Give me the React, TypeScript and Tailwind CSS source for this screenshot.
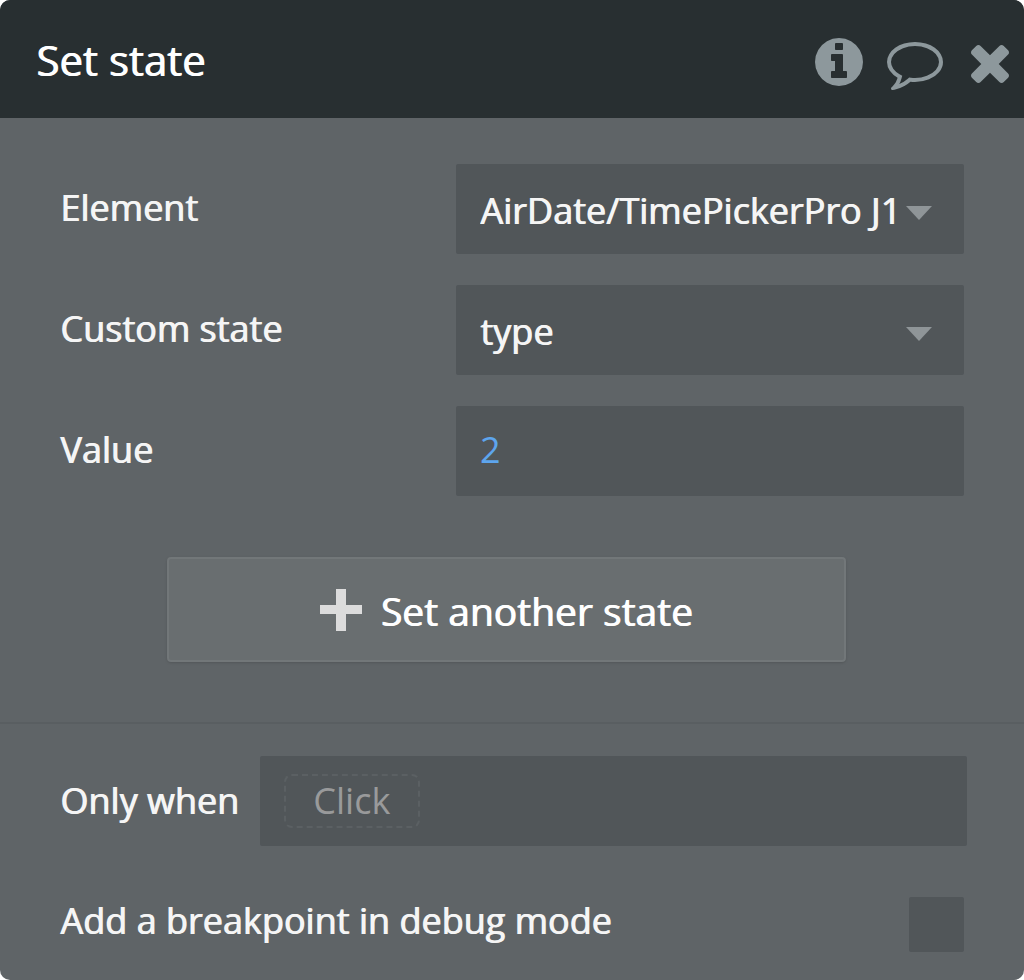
import type { ReactNode } from "react";

type IconProps = { className: string };

function InfoIcon({ className }: IconProps) {
  return (
    <svg viewBox="128 128 1536 1536" className={className} fill="currentColor" aria-hidden="true">
      <path d="M1152 1376v-160q0-14-9-23t-23-9h-96v-512q0-14-9-23t-23-9h-320q-14 0-23 9t-9 23v160q0 14 9 23t23 9h96v320h-96q-14 0-23 9t-9 23v160q0 14 9 23t23 9h448q14 0 23-9t9-23zm-128-896v-160q0-14-9-23t-23-9h-192q-14 0-23 9t-9 23v160q0 14 9 23t23 9h192q14 0 23-9t9-23zm640 416q0 209-103 385.5t-279.5 279.5-385.5 103-385.5-103-279.5-279.5-103-385.5 103-385.5 279.5-279.5 385.5-103 385.5 103 279.5 279.5 103 385.5z" />
    </svg>
  );
}

function CommentIcon({ className }: IconProps) {
  return (
    <svg viewBox="0 256 1792 1536" className={className} fill="currentColor" aria-hidden="true">
      <path d="M896 384q-204 0-381.5 69.5t-282 187.5-104.5 255q0 112 71.5 213.5t201.5 175.5l87 50-27 96q-24 91-70 172 152-63 275-171l43-38 57 6q69 8 130 8 204 0 381.5-69.5t282-187.5 104.5-255-104.5-255-282-187.5-381.5-69.5zm896 512q0 174-120 321.5t-326 233-450 85.5q-70 0-145-8-198 175-460 242-49 14-114 22h-5q-15 0-27-10.5t-16-27.5v-1q-3-4-.5-12t2-10 4.5-9.5l6-9 7-8.5 8-9q7-8 31-34.5t34.5-38 31-39.5 32.5-51 27-59 26-76q-157-89-247.5-220t-90.5-281q0-130 71-248.5t191-204.5 286-136.5 348-50.5 348 50.5 286 136.5 191 204.5 71 248.5z" />
    </svg>
  );
}

function CloseIcon({ className }: IconProps) {
  return (
    <svg viewBox="302 366 1188 1188" className={className} fill="currentColor" aria-hidden="true">
      <path d="M1490 1322q0 40-28 68l-136 136q-28 28-68 28t-68-28l-294-294-294 294q-28 28-68 28t-68-28l-136-136q-28-28-28-68t28-68l294-294-294-294q-28-28-28-68t28-68l136-136q28-28 68-28t68 28l294 294 294-294q28-28 68-28t68 28l136 136q28 28 28 68t-28 68l-294 294 294 294q28 28 28 68z" />
    </svg>
  );
}

function Row({ id, label, children }: { id: string; label: string; children: ReactNode }) {
  return (
    <div className="flex items-center">
      <label htmlFor={id} className="w-[396px] shrink-0 pb-0.5">
        {label}
      </label>
      <div className="min-w-0 flex-1">{children}</div>
    </div>
  );
}

function Dropdown({ id, value }: { id: string; value: string }) {
  return (
    <div className="relative">
      <select
        id={id}
        defaultValue={value}
        className="block h-[90px] w-full appearance-none rounded-xs bg-[#515659] pt-1 pr-8 pl-6 outline-none [text-shadow:1px_0_0_currentColor]"
      >
        <option>{value}</option>
      </select>
      <svg
        viewBox="0 0 26 14"
        className="pointer-events-none absolute top-[42px] right-8 h-3.5 w-[26px] fill-[#8f9598]"
        aria-hidden="true"
      >
        <path d="M0 0h26L13 14z" />
      </svg>
    </div>
  );
}

export default function App() {
  return (
    <main className="overflow-hidden rounded-[10px] bg-[#5f6467] font-['Open_Sans',sans-serif] text-[36px] leading-[48px] text-[#f5f5f5] [text-shadow:1px_0_0_currentColor]">
      <header className="flex h-[118px] items-center justify-between bg-[#282f31] pr-[15px] pl-9">
        <h1 className="pt-0.5 text-[42px] text-white">Set state</h1>
        <div className="flex items-center pt-1.5 text-[#8d989c]">
          <button type="button" aria-label="Information" className="mr-6">
            <InfoIcon className="size-12" />
          </button>
          <button type="button" aria-label="Comment" className="mr-7">
            <CommentIcon className="mt-2 h-12 w-14" />
          </button>
          <button type="button" aria-label="Close">
            <CloseIcon className="mt-1 size-[38px]" />
          </button>
        </div>
      </header>

      <section className="border-b-2 border-[#595e61] px-[60px] pt-[46px] pb-[60px]">
        <div className="flex flex-col gap-[31px]">
          <Row id="element" label="Element">
            <Dropdown id="element" value="AirDate/TimePickerPro J1" />
          </Row>
          <Row id="custom-state" label="Custom state">
            <Dropdown id="custom-state" value="type" />
          </Row>
          <Row id="value" label="Value">
            <input
              id="value"
              type="text"
              defaultValue="2"
              className="block h-[90px] w-full rounded-xs bg-[#515659] px-6 pb-1 text-[#5da5ee] outline-none"
            />
          </Row>
        </div>
        <div className="mt-[61px] flex pr-[118px] pl-[107px]">
          <button
            type="button"
            className="flex h-[105px] flex-1 items-center justify-center gap-[18px] rounded-sm border-2 border-[#727779] bg-[#696e70] text-[39px] text-white shadow-sm [text-shadow:1px_0_0_currentColor]"
          >
            <svg viewBox="0 0 42 42" className="size-[42px] fill-[#dcdcdc]" aria-hidden="true">
              <path d="M16 0h10v16h16v9H26v17H16V25H0v-9h16z" />
            </svg>
            <span className="pt-0.5">Set another state</span>
          </button>
        </div>
      </section>

      <section className="pt-8 pr-[57px] pb-7 pl-[60px]">
        <div className="flex items-center gap-[21px]">
          <span>Only when</span>
          <div className="flex h-[90px] flex-1 items-center rounded-xs bg-[#515659] px-6">
            <button
              type="button"
              className="flex h-[54px] w-[136px] items-center justify-center rounded-lg border-2 border-dashed border-[#5b6063] text-[#999a9b]"
            >
              Click
            </button>
          </div>
        </div>
        <div className="mt-[51px] flex items-start justify-between pr-[3px]">
          <label htmlFor="breakpoint">Add a breakpoint in debug mode</label>
          <input
            id="breakpoint"
            type="checkbox"
            className="size-[55px] appearance-none rounded-xs bg-[#515659]"
          />
        </div>
      </section>
    </main>
  );
}
